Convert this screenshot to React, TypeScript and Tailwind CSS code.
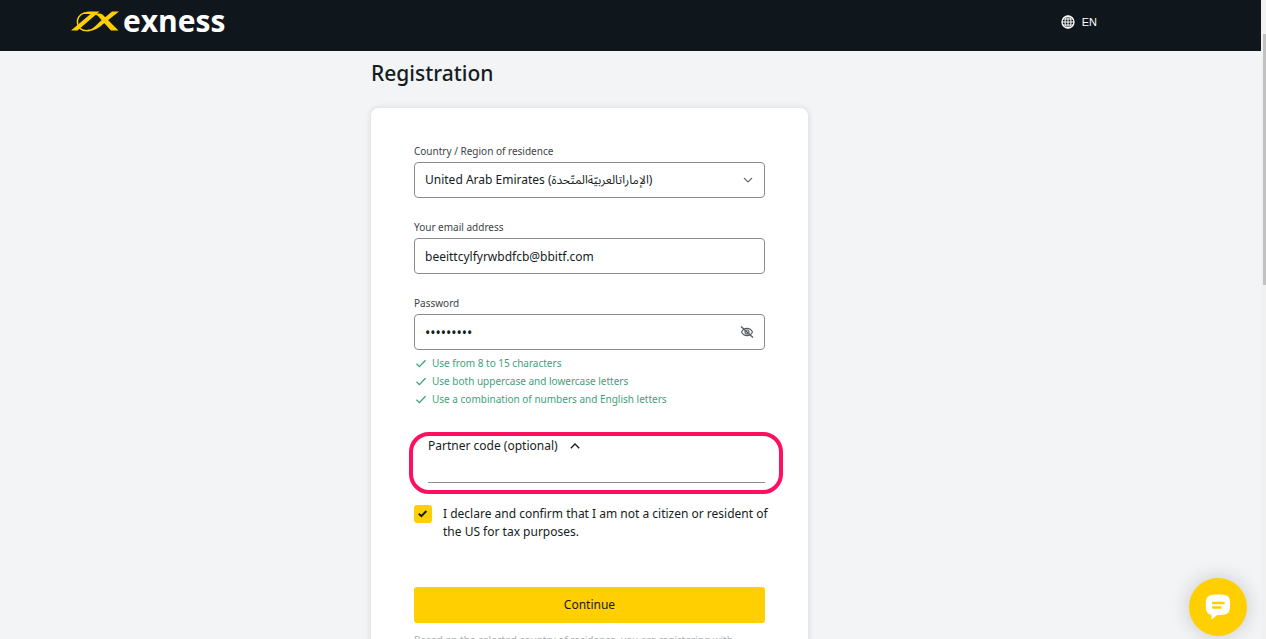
import { useState } from 'react';

const passwordRules = [
  'Use from 8 to 15 characters',
  'Use both uppercase and lowercase letters',
  'Use a combination of numbers and English letters',
];

const fieldClass =
  'block h-9 w-full appearance-none rounded-[4px] border border-[#8c8c8f] bg-white px-2.5 text-[#141d22] focus:outline-none';
const labelClass = 'mb-0.5 block text-[10px] leading-[18px] text-[#3c4348]';

function Logo() {
  return (
    <a href="#" className="flex items-center gap-1" aria-label="Exness home">
      <svg width="48" height="24" viewBox="0 0 48 24" fill="none">
        <path d="M0 21.5 L19.5 5 H12 C13.5 3.4 15 2.5 17.5 2.5 H28.5 L6.5 21.5 Z" fill="#ffcf01" />
        <path d="M14 3.6 C8 5.5 5 10.5 7 16 C8.5 21 14 22.6 19 21" stroke="#ffcf01" strokeWidth="1.4" />
        <path d="M24 5 C28 4.2 30.5 4.4 32.5 6.5 L47.5 21.5 H40 L30 10.5 C28.5 8.5 27 6.5 24 5 Z" fill="#ffcf01" />
        <path d="M41 2.5 H48 L33.5 14 C28 18.5 24 22.5 14.5 22.3 C20.5 21 24 17.5 28 13.5 Z" fill="#ffcf01" />
      </svg>
      <span className="font-['Open_Sans',sans-serif] text-[30px] leading-8 font-bold text-white">exness</span>
    </a>
  );
}

function GlobeIcon() {
  return (
    <svg width="14" height="14" viewBox="0 0 14 14" fill="none" stroke="currentColor" strokeWidth="1">
      <circle cx="7" cy="7" r="6" strokeWidth="1.3" />
      <ellipse cx="7" cy="7" rx="3" ry="6" />
      <path d="M7 1 V13 M1 7 H13 M2 4 H12 M2 10 H12" />
    </svg>
  );
}

export default function App() {
  const [country, setCountry] = useState('AE');
  const [email, setEmail] = useState('beeittcylfyrwbdfcb@bbitf.com');
  const [password, setPassword] = useState('Abcdef123');
  const [showPassword, setShowPassword] = useState(false);
  const [partnerCode, setPartnerCode] = useState('');
  const [partnerOpen, setPartnerOpen] = useState(true);
  const [declared, setDeclared] = useState(true);

  return (
    <div className="flex h-screen overflow-hidden bg-[#f3f4f6] font-['Noto_Sans','Noto_Sans_Arabic','DejaVu_Sans',sans-serif] text-[12px] text-[#141d22]">
      <div className="relative min-w-0 flex-1 overflow-hidden">
        <header className="flex h-[51px] items-start justify-between bg-[#0f171d] pt-[5px] pr-[164px] pl-[71px]">
          <Logo />
          <button type="button" className="flex h-[34px] items-center gap-[7px] font-['Liberation_Sans',sans-serif] text-[11px] text-white">
            <GlobeIcon />
            EN
          </button>
        </header>

        <main className="pr-[82px]">
          <div className="mx-auto w-full max-w-[437px]">
            <h1 className="pt-2 pb-5 text-[21px] leading-[29px] font-medium">Registration</h1>

            <form
              onSubmit={(e) => e.preventDefault()}
              className="rounded-lg bg-white px-[43px] pt-[34px] pb-10 shadow-[0_0_6px_rgba(20,29,34,0.14)]"
            >
              <div>
                <label htmlFor="country" className={labelClass}>Country / Region of residence</label>
                <div className="relative">
                  <select id="country" value={country} onChange={(e) => setCountry(e.target.value)} className={fieldClass}>
                    <option value="AE">United Arab Emirates (الإماراتالعربيّةالمتّحدة)</option>
                  </select>
                  <svg className="pointer-events-none absolute top-3 right-3 text-[#6b6f73]" width="10" height="12" viewBox="0 0 10 12" fill="none" stroke="currentColor" strokeWidth="1.2">
                    <path d="M1 4 L5 8 L9 4" />
                  </svg>
                </div>
              </div>

              <div className="mt-5">
                <label htmlFor="email" className={labelClass}>Your email address</label>
                <input id="email" type="email" value={email} onChange={(e) => setEmail(e.target.value)} className={fieldClass} />
              </div>

              <div className="mt-5">
                <label htmlFor="password" className={labelClass}>Password</label>
                <div className="relative text-[14px]">
                  <input
                    id="password"
                    type={showPassword ? 'text' : 'password'}
                    value={password}
                    onChange={(e) => setPassword(e.target.value)}
                    className={fieldClass}
                  />
                  <button
                    type="button"
                    aria-label="Show password"
                    onClick={() => setShowPassword(!showPassword)}
                    className="absolute inset-y-0 right-[11px] flex items-center text-[#55595c]"
                  >
                    <svg width="14" height="14" viewBox="0 0 14 14" fill="none" stroke="currentColor" strokeWidth="1.1">
                      <path d="M1.5 7 C4 2.2 10 2.2 12.5 7 C10 11.8 4 11.8 1.5 7 Z" />
                      <circle cx="7" cy="7" r="2" />
                      <path d="M1 1.5 L13 12.5" strokeWidth="1.3" />
                    </svg>
                  </button>
                </div>
              </div>

              <ul className="mt-1 text-[10px] leading-[18px] text-[#3f9f7c]">
                {passwordRules.map((rule) => (
                  <li key={rule} className="flex items-center gap-1.5 pl-0.5">
                    <svg width="10" height="9" viewBox="0 0 10 9" fill="none" stroke="currentColor" strokeWidth="1.3">
                      <path d="M0.5 4.8 L3.4 7.6 L9.5 1.2" />
                    </svg>
                    {rule}
                  </li>
                ))}
              </ul>

              <div className="relative mt-[29px] pl-3.5">
                <div className="pointer-events-none absolute -top-[5px] -right-[18px] -bottom-[11px] -left-[5px] rounded-[20px] border-4 border-[#ff0f5f]" />
                <button
                  type="button"
                  aria-expanded={partnerOpen}
                  onClick={() => setPartnerOpen(!partnerOpen)}
                  className="flex items-center gap-3 leading-[18px]"
                >
                  Partner code (optional)
                  <svg width="10" height="6" viewBox="0 0 10 6" fill="none" stroke="currentColor" strokeWidth="1.3">
                    <path d="M0.8 5.2 L5 1 L9.2 5.2" />
                  </svg>
                </button>
                {partnerOpen && (
                  <input
                    type="text"
                    aria-label="Partner code"
                    value={partnerCode}
                    onChange={(e) => setPartnerCode(e.target.value)}
                    className="block h-7 w-full border-b border-[#8c8c8f] focus:outline-none"
                  />
                )}
              </div>

              <label htmlFor="declare" className="-mr-3 mt-[22px] flex items-start gap-[11px] leading-[18px]">
                <span className="relative size-[18px] shrink-0">
                  <input
                    id="declare"
                    type="checkbox"
                    checked={declared}
                    onChange={(e) => setDeclared(e.target.checked)}
                    className="block size-[18px] appearance-none rounded-[3px] bg-[#ffcf01]"
                  />
                  {declared && (
                    <svg className="pointer-events-none absolute inset-0" width="18" height="18" viewBox="0 0 18 18" fill="none" stroke="currentColor" strokeWidth="2">
                      <path d="M4.8 8.8 L7.4 11.2 L12.4 6" />
                    </svg>
                  )}
                </span>
                <span>I declare and confirm that I am not a citizen or resident of the US for tax purposes.</span>
              </label>

              <button type="submit" className="mt-[46px] h-9 w-full rounded-[3px] bg-[#ffcf01]">
                Continue
              </button>

              <p className="mt-2 text-[10px] leading-[18px] text-[#a9adb0]">
                Based on the selected country of residence, you are registering with Exness.
              </p>
            </form>
          </div>
        </main>

        <button
          type="button"
          aria-label="Open chat"
          className="absolute right-3.5 bottom-[3px] flex size-[58px] items-center justify-center rounded-full bg-[#ffcf01] shadow-[0_0_20px_rgba(20,29,34,0.2)]"
        >
          <svg width="26" height="26" viewBox="0 0 26 26" fill="none">
            <path d="M7 1 C12 0.4 16 0.5 19.5 1 C23 1.4 24.6 3.5 25 7 C25.2 10 25.2 12 24.8 15 C24.3 18.5 22.5 20.2 19.5 20.6 C16.5 21 14 21.2 12 21.2 L6.5 25.6 V20.8 C3 20.3 1.4 18.2 1 15 C0.7 12 0.7 9 1 6.5 C1.4 3.3 3.5 1.4 7 1 Z" fill="#fff" />
            <path d="M8 9 H18.5 M8 13.5 H15.5" stroke="#ffcf01" strokeWidth="2.4" strokeLinecap="round" />
          </svg>
        </button>
      </div>

      <div className="w-[5px] shrink-0 bg-[#f1f1f1] pt-[34px] pl-0.5" aria-hidden="true">
        <div className="h-[251px] bg-[#c1c1c1]" />
      </div>
    </div>
  );
}
